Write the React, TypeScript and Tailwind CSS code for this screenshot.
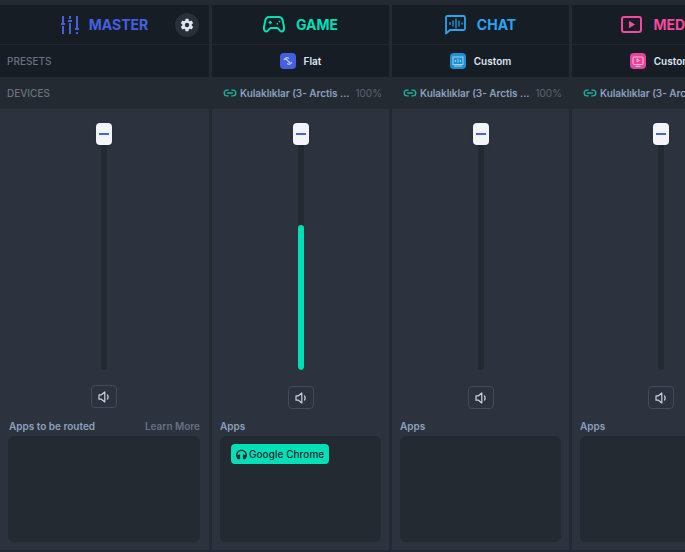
import { FaHeadphones } from "react-icons/fa";
import { IoSettingsSharp } from "react-icons/io5";
import { Link2 } from "lucide-react";
import type { ReactNode } from "react";

const MasterIcon = () => (
  <svg width="18" height="20" viewBox="0 0 18 20" fill="none" stroke="#4460e0" strokeWidth="2">
    <path d="M2 1v7M0 9h4M2 11v8" />
    <path d="M9 1v3M7 6h4M9 8v11" />
    <path d="M16 1v12M14 14h4M16 17v2" />
  </svg>
);

const GameIcon = () => (
  <svg width="22" height="17" viewBox="0 0 22 17" fill="none" stroke="#00dfb6" strokeWidth="2" strokeLinejoin="round">
    <path d="M6 1h10c2 0 3 1 3.600 3l1.400 7c.4 2.500-.6 4.500-2.500 4.500-2 0-2.500-3.500-4.500-3.500H8c-2 0-2.500 3.500-4.500 3.500C1.600 15.500.6 13.500 1 11l1.400-7C3 2 4 1 6 1z" />
    <path d="M5.500 6.500h3.400M7.200 4.800v3.400" strokeWidth="1.300" />
    <path d="M13.600 7.800h1.400M15.800 5.400h1.400" strokeWidth="1.500" />
  </svg>
);

const ChatIcon = () => (
  <svg width="21" height="20" viewBox="0 0 21 20" fill="none" stroke="#2aa4f0" strokeWidth="1.800">
    <path d="M1 18.500V2.500C1 1.500 1.500 1 2.500 1h16c1 0 1.500.5 1.500 1.500v11c0 1-.5 1.500-1.500 1.500H5z" strokeLinejoin="round" />
    <path d="M5 7v3M8 5.500v6M11 3.500v10M14 5.500v6M17 7.500v2" strokeWidth="1.200" />
  </svg>
);

const MediaIcon = () => (
  <svg width="21" height="17" viewBox="0 0 21 17" fill="none" stroke="#f6489f" strokeWidth="2">
    <rect x="1" y="1" width="19" height="15" rx="2" />
    <path d="M8 4.800v7.400l6-3.700z" fill="#f6489f" stroke="none" />
  </svg>
);

const FlatIcon = () => (
  <svg width="12" height="12" viewBox="0 0 12 12" fill="none" stroke="#b9c4f3" strokeWidth="1.300">
    <path d="M2 5c1.500-2.500 3-3 5-1.500M10 7c-1.500 2.500-3 3-5 1.500M3.500 3.500l5 5" />
  </svg>
);

const ChatPresetIcon = () => (
  <svg width="12" height="11" viewBox="0 0 12 11" fill="none" stroke="#a9d8f2" strokeWidth="0.900">
    <rect x="1" y="1" width="10" height="7.500" />
    <path d="M3.500 4v2M6 3v3.500M8.500 4v2M2 10h8" />
  </svg>
);

const MediaPresetIcon = () => (
  <svg width="12" height="11" viewBox="0 0 12 11" fill="none" stroke="#fbc9e2" strokeWidth="0.900">
    <rect x="1" y="1" width="10" height="7.500" rx="1" />
    <path d="M5 3v3l2.500-1.500zM3.500 10.300h5" />
  </svg>
);

const SpeakerIcon = () => (
  <svg width="12" height="12" viewBox="0 0 12 12" fill="none" stroke="#cbd2e2" strokeWidth="1.200">
    <path d="M1 3.800h2.400L6.800 1v10L3.400 8.200H1z" strokeLinejoin="round" />
    <path d="M9.300 3.500c1 1.500 1 3.500 0 5" />
  </svg>
);

type ChannelProps = {
  name: string;
  width: string;
  nameColor: string;
  icon: ReactNode;
  preset?: string;
  presetBg?: string;
  presetIcon?: ReactNode;
  fillHeight?: string;
  chip?: boolean;
  master?: boolean;
};

const Channel = ({ name, width, nameColor, icon, preset, presetBg, presetIcon, fillHeight, chip, master }: ChannelProps) => (
  <div className={`${width} shrink-0 flex flex-col`}>
    <div className={`relative h-10 border-b border-[#20262e] bg-[#171d25] flex items-center justify-center whitespace-nowrap ${master ? "gap-[10px]" : "gap-[11px]"}`}>
      {icon}
      <span className={`text-[14px] font-bold ${nameColor}`}>{name}</span>
      {master && (
        <button className="absolute right-[10px] top-2 size-6 rounded-full bg-[#2a3038] flex items-center justify-center text-[#dfe4f0]">
          <IoSettingsSharp size={14} />
        </button>
      )}
    </div>

    <div className="h-8 bg-[#171d25] flex items-center justify-center gap-2 whitespace-nowrap">
      {master ? (
        <span className="w-full pl-[7px] text-[10px] font-medium text-[#687280]">PRESETS</span>
      ) : (
        <>
          <span className={`size-4 rounded flex items-center justify-center ${presetBg}`}>{presetIcon}</span>
          <span className="text-[10px] font-semibold text-[#dde4f2]">{preset}</span>
        </>
      )}
    </div>

    <div className="h-8 bg-[#242a32] flex items-center whitespace-nowrap overflow-hidden">
      {master ? (
        <span className="pl-[7px] text-[10px] font-medium text-[#687280]">DEVICES</span>
      ) : (
        <div className="flex items-center w-full pl-[11px] pr-[7px]">
          <Link2 size={14} strokeWidth={2.2} className="text-[#14b8a0] shrink-0" />
          <span className="ml-[3px] text-[10px] font-semibold tracking-[-0.04px] text-[#8ba0bf]">Kulaklıklar (3- Arctis ...</span>
          <span className="ml-auto text-[10px] text-[#5a6472]">100%</span>
        </div>
      )}
    </div>

    <div className="h-[441px] bg-[#2d333e] flex flex-col">
      <div className={`self-center flex flex-col items-center ${master ? "-translate-x-px" : ""}`}>
        <div className="relative mt-[14px] h-[247px] w-[16px] flex justify-center">
          <div className="mt-1 w-[6px] h-[243px] bg-[#242a32] rounded-sm flex flex-col justify-end overflow-hidden">
            {fillHeight && <div className={`${fillHeight} bg-[#00dfb6] rounded-sm`} />}
          </div>
          <div className="absolute top-0 left-0 w-4 h-[22px] rounded-sm bg-[#f3f5fb] shadow flex items-center justify-center">
            <span className="w-[10px] h-[2px] bg-[#4a60de]" />
          </div>
        </div>

        <button className={`${master ? "mt-[15px] mb-[10px]" : "mt-[16px] mb-[9px]"} w-[26px] h-[23px] rounded border border-[#434a58] flex items-center justify-center`}>
          <SpeakerIcon />
        </button>
      </div>

      <div className={`w-full pl-2 flex flex-col ${master ? "pr-[9px]" : "pr-2"}`}>
        <div className={`flex justify-between text-[10px] font-semibold h-[17px] items-center ${master ? "pl-px" : ""}`}>
          <span className="text-[#8ba0bf]">{master ? "Apps to be routed" : "Apps"}</span>
          {master && <span className="text-[#667085]">Learn More</span>}
        </div>
        <div className="h-[106px] rounded-md bg-[#242a32] mt-px p-2 pl-[11px]">
          {chip && (
            <div className="flex w-fit items-center gap-[2px] h-5 pl-[5px] pr-[5px] rounded-[4px] bg-[#00dfb6] text-[#1f2a33] text-[10px] font-medium tracking-[0.05px]">
              <FaHeadphones size={11} />
              Google Chrome
            </div>
          )}
        </div>
      </div>
    </div>
  </div>
);

export default function App() {
  return (
    <div className="h-[552px] w-[685px] overflow-hidden bg-[#242a32] pt-[5px] font-['Inter',sans-serif] flex gap-[3px]">
      <Channel
        master
        name="MASTER"
        width="w-[209px]"
        nameColor="text-[#4460e0]"
        icon={<MasterIcon />}
      />
      <Channel
        name="GAME"
        width="w-[177px]"
        nameColor="text-[#00dfb6]"
        icon={<GameIcon />}
        preset="Flat"
        presetBg="bg-[#4460e0]"
        presetIcon={<FlatIcon />}
        fillHeight="h-[145px]"
        chip
      />
      <Channel
        name="CHAT"
        width="w-[177px]"
        nameColor="text-[#2aa4f0]"
        icon={<ChatIcon />}
        preset="Custom"
        presetBg="bg-[#2190d0]"
        presetIcon={<ChatPresetIcon />}
      />
      <Channel
        name="MEDIA"
        width="w-[177px]"
        nameColor="text-[#f6489f]"
        icon={<MediaIcon />}
        preset="Custom"
        presetBg="bg-[#e8439a]"
        presetIcon={<MediaPresetIcon />}
      />
    </div>
  );
}
